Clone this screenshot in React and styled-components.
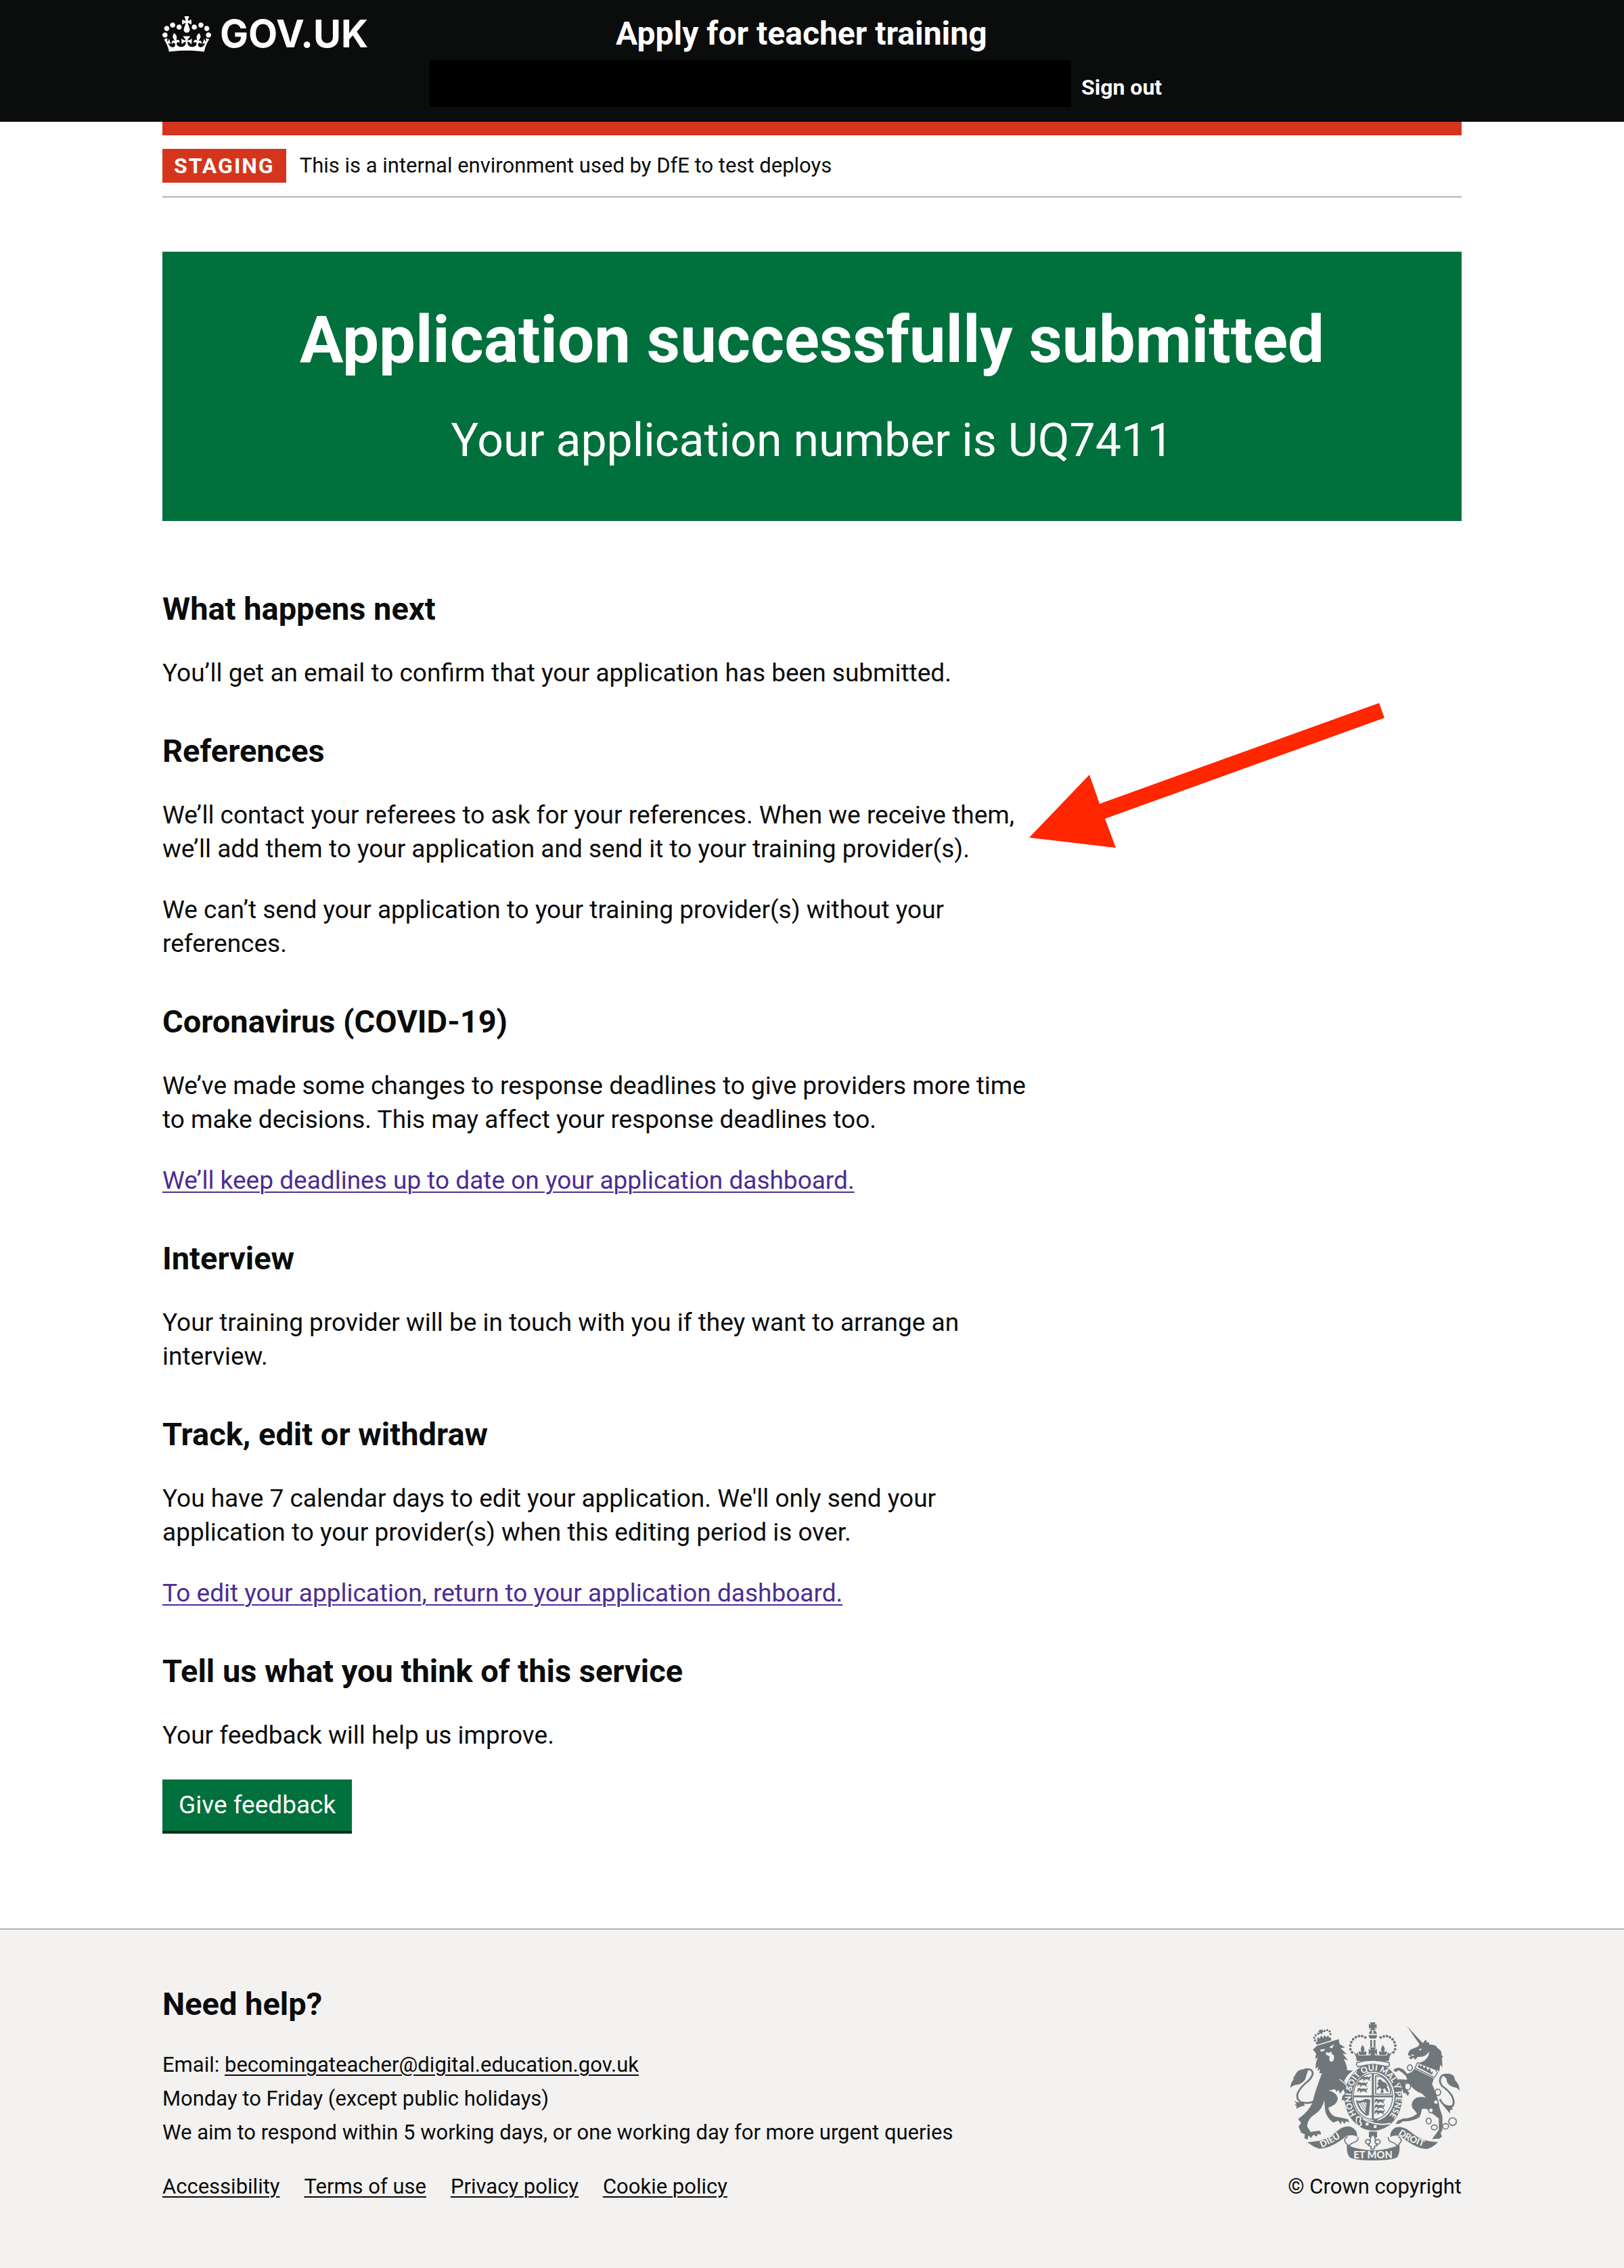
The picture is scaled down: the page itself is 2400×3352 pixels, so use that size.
import React from "react";
import styled, { createGlobalStyle } from "styled-components";

const color = {
  ink: "#0b0c0c",
  red: "#d4351c",
  green: "#00703c",
  greenShadow: "#002d18",
  border: "#b1b4b6",
  footer: "#f3f2f1",
  visited: "#4c2c92",
  arms: "#6f777b",
};

const GlobalStyle = createGlobalStyle`
  *, *::before, *::after { box-sizing: border-box; }
  body {
    margin: 0;
    background: ${color.footer};
    color: ${color.ink};
    font-family: Roboto, "Liberation Sans", sans-serif;
    -webkit-font-smoothing: antialiased;
  }
  h1, h2, p, ul { margin: 0; padding: 0; }
  a {
    text-decoration-thickness: 2px;
    text-underline-offset: 4px;
  }
`;

const Page = styled.div`
  background: #ffffff;
`;

const Container = styled.div`
  margin: 0 10%;
`;

const Header = styled.header`
  background: ${color.ink};
  color: #ffffff;
  padding: 20px 0 22px;
`;

const HeaderRow = styled.div`
  display: flex;
  align-items: center;
  height: 60px;
`;

const LogoLink = styled.a`
  display: flex;
  align-items: center;
  gap: 13px;
  flex: 0 0 670px;
  color: inherit;
  text-decoration: none;
  font: 700 56px/60px Inter, Roboto, sans-serif;
`;

const ServiceLink = styled.a`
  color: inherit;
  text-decoration: none;
  font-size: 48px;
  font-weight: 700;
  line-height: 60px;
`;

const AccountNav = styled.nav`
  display: flex;
  align-items: center;
  gap: 15px;
  margin: 9px 0 0 395px;
`;

const Redacted = styled.div`
  flex: 0 1 948px;
  height: 69px;
  background: #000000;
`;

const SignOut = styled.a`
  padding-top: 10px;
  color: inherit;
  text-decoration: none;
  font-size: 32px;
  font-weight: 700;
  line-height: 40px;
`;

const PhaseBanner = styled.div`
  display: flex;
  gap: 20px;
  padding: 20px 0;
  border-top: 20px solid ${color.red};
  border-bottom: 2px solid ${color.border};
  font-size: 31px;
  line-height: 50px;
`;

const PhaseTag = styled.strong`
  padding: 0 17px;
  background: ${color.red};
  color: #ffffff;
  font-size: 32px;
  letter-spacing: 2px;
`;

const Main = styled.main`
  padding: 80px 0 144px;
`;

const Panel = styled.div`
  display: grid;
  gap: 60px;
  padding: 80px;
  background: ${color.green};
  color: #ffffff;
  text-align: center;
`;

const PanelTitle = styled.h1`
  font-size: 96px;
  font-weight: 700;
  line-height: 100px;
`;

const PanelBody = styled.p`
  font-size: 68px;
  line-height: 78px;
`;

const Columns = styled.div`
  position: relative;
  margin-top: 100px;
`;

const Content = styled.div`
  display: flex;
  flex-direction: column;
  align-items: flex-start;
  gap: 60px;
  width: 68%;
`;

const Section = styled.section`
  display: grid;
  justify-items: start;
  gap: 40px;
`;

const Heading = styled.h2`
  font-size: 47px;
  font-weight: 700;
  line-height: 60px;
`;

const Text = styled.p`
  font-size: 37px;
  line-height: 50px;
`;

const VisitedLink = styled.a`
  color: ${color.visited};
`;

const Button = styled.button`
  padding: 0 24px;
  height: 76px;
  border: 0;
  background: ${color.green};
  box-shadow: 0 4px 0 ${color.greenShadow};
  color: #ffffff;
  font: 400 37px/76px Roboto, "Liberation Sans", sans-serif;
`;

const Arrow = styled.svg`
  position: absolute;
  left: 1281px;
  top: 169px;
  width: 525px;
  height: 215px;
`;

const Footer = styled.footer`
  padding: 80px 0 101px;
  border-top: 2px solid ${color.border};
  background: ${color.footer};
  font-size: 31px;
  line-height: 50px;
`;

const FooterLayout = styled(Container)`
  display: flex;
  justify-content: space-between;
  align-items: flex-end;
`;

const Help = styled.div`
  display: grid;
  gap: 35px;
`;

const FooterLink = styled.a`
  color: inherit;
`;

const FooterLinks = styled.ul`
  display: flex;
  gap: 36px;
  list-style: none;
  line-height: 40px;
`;

const Copyright = styled.a`
  display: grid;
  justify-items: center;
  gap: 19px;
  color: inherit;
  text-decoration: none;
  line-height: 40px;
`;

function Crown() {
  return (
    <svg width="72" height="53" viewBox="0 0 132 97" fill="currentColor" aria-hidden="true">
      <path
        fillRule="evenodd"
        d="M25 30.2c3.5 1.5 7.7-.2 9.1-3.7 1.5-3.6-.2-7.8-3.9-9.2-3.6-1.4-7.6.3-9.1 3.9-1.4 3.5.3 7.5 3.9 9zM9 39.5c3.6 1.5 7.8-.2 9.2-3.7 1.5-3.6-.2-7.8-3.9-9.1-3.6-1.5-7.6.2-9.1 3.8-1.4 3.5.3 7.5 3.8 9zM4.4 57.2c3.5 1.5 7.7-.2 9.1-3.8 1.5-3.6-.2-7.7-3.9-9.1-3.5-1.5-7.6.3-9.1 3.8-1.4 3.5.3 7.6 3.9 9.1zm38.3-21.4c3.5 1.5 7.7-.2 9.1-3.8 1.5-3.6-.2-7.7-3.9-9.1-3.6-1.5-7.6.3-9.1 3.8-1.3 3.6.4 7.7 3.9 9.1zm64.4-5.6c-3.6 1.5-7.8-.2-9.1-3.7-1.5-3.6.2-7.8 3.8-9.2 3.6-1.4 7.7.3 9.2 3.9 1.3 3.5-.4 7.5-3.9 9zm15.9 9.3c-3.6 1.5-7.7-.2-9.1-3.7-1.5-3.6.2-7.8 3.7-9.1 3.6-1.5 7.7.2 9.2 3.8 1.5 3.5-.3 7.5-3.8 9zm4.7 17.7c-3.6 1.5-7.8-.2-9.2-3.8-1.5-3.6.2-7.7 3.9-9.1 3.6-1.5 7.7.3 9.2 3.8 1.3 3.5-.4 7.6-3.9 9.1zM89.3 35.8c-3.6 1.5-7.8-.2-9.2-3.8-1.4-3.6.2-7.7 3.9-9.1 3.6-1.5 7.7.3 9.2 3.8 1.4 3.6-.3 7.7-3.9 9.1zM69.7 17.7l8.9 4.7V9.3l-8.9 2.8c-.2-.3-.5-.6-.9-.9L72.4 0H59.6l3.5 11.2c-.3.3-.6.5-.9.9l-8.8-2.8v13.1l8.8-4.7c.3.3.6.7.9.9l-5 15.4v.1c-.2.8-.4 1.6-.4 2.4 0 4.1 3.1 7.5 7 8.1h.2c.3 0 .7.1 1 .1.4 0 .7 0 1-.1h.2c4-.6 7.1-4.1 7.1-8.1 0-.8-.1-1.7-.4-2.4V34l-5.1-15.4c.4-.2.7-.6 1-.9zM66 92.8c16.9 0 32.8 1.1 47.1 3.2 4-16.9 8.9-26.7 14-33.5l-9.6-3.4c1 4.9 1.1 7.2 0 10.2-1.5-1.4-3-4.3-4.2-8.7L108.6 76c2.8-2 5-3.2 7.5-3.3-4.4 9.4-10 11.9-13.6 11.2-4.3-.8-6.3-4.6-5.6-7.9 1-4.7 5.7-5.9 8-.5 4.3-8.7-3-11.4-7.6-8.8 7.1-7.2 7.9-13.5 2.1-21.1-8 6.1-8.1 12.3-4.5 20.8-4.7-5.4-12.1-2.5-9.5 6.2 3.4-5.2 7.9-2 7.2 3.1-.6 4.3-6.4 7.8-13.5 7.2-10.3-.9-10.9-8-11.2-13.8 2.5-.5 7.1 1.8 11 7.3L80.2 60c-4.1 4.4-8 5.3-12.3 5.4 1.4-4.4 8-11.6 8-11.6H55.5s6.4 7.2 7.9 11.6c-4.2-.1-8-1-12.3-5.4l1.4 16.4c3.9-5.5 8.5-7.7 10.9-7.3-.3 5.8-.9 12.8-11.1 13.8-7.2.6-12.9-2.9-13.5-7.2-.7-5 3.8-8.3 7.1-3.1 2.7-8.7-4.6-11.6-9.4-6.2 3.7-8.5 3.6-14.7-4.6-20.8-5.8 7.6-5 13.9 2.2 21.1-4.7-2.6-11.9.1-7.7 8.8 2.3-5.5 7.1-4.2 8.1.5.7 3.3-1.3 7.1-5.7 7.9-3.5.7-9-1.8-13.5-11.2 2.5.1 4.7 1.3 7.5 3.3l-4.7-15.4c-1.2 4.4-2.7 7.2-4.3 8.7-1.1-3-.9-5.3 0-10.2l-9.5 3.4c5 6.9 9.9 16.7 14 33.5 14.8-2.1 30.8-3.2 47.7-3.2z"
      />
    </svg>
  );
}

/* Walking lions of England, repeated in the first and fourth quarters. */
const passant =
  "M0 4l8-4 8 4 14-1 8 3 4-6 3 1-3 9-5 4 6 6-6 1-6-6-12 0-3 6-7 0 4-7-7-2-4 6-5-1 3-6z";

const crownBeads = [
  [345, 217], [338, 203], [338, 187], [342, 172], [350, 159], [362, 150], [376, 145], [390, 145], [404, 151],
  [472, 151], [486, 146], [500, 145], [513, 150], [525, 159], [533, 172], [537, 187], [536, 203], [529, 217],
];

const lionCrownBeads = [
  [181, 164], [178, 152], [184, 141], [195, 134], [223, 122], [235, 118], [246, 124], [250, 136],
];

function RoyalArms() {
  const ink = color.arms;
  const paper = color.footer;
  return (
    <svg width="250" height="204" viewBox="72 84 750 612" fill={ink} aria-hidden="true">
      <defs>
        <path id="garter" d="M365 492A99 117 0 1 1 515 492" />
        <path id="dieu" d="M209 640Q262 618 322 577" />
        <path id="droit" d="M548 579Q600 618 680 640" />
      </defs>

      {/* Imperial crown */}
      <path d="M424 84h26l-6 11 10-5v22l-10-6 6 12h-26l6-12-10 6V90l10 5z" />
      <path d="M420 135q3-15 14-17v17zM440 118q13 3 16 17h-16zM419 140h37q2 10-7 16h-23q-9-6-7-16z" />
      {crownBeads.map(([x, y]) => (
        <circle key={`${x}-${y}`} cx={x} cy={y} r="6" />
      ))}
      <path d="M426 162h8v30h-8zM441 162h8v30h-8z" />
      <path d="M392 184q-14 18-4 33l-12-6q-4 10 2 17h28q6-8 0-17l-10 6q10-15-4-33zM482 184q-14 18-4 33l-10-6q-6 9 0 17h28q6-8 2-17l-12 6q10-15-4-33z" />
      <path d="M422 194h31l-9 14 12-6v26l-12-8 5 12h-24l5-12-11 8v-26l12 6zM349 212l14 12 8-8 2 14h128l3-14 8 8 14-12q-16 20-18 43H366q-1-22-17-43z" />
      <path d="M368 262q70-20 140 0 8 10-4 19-66-18-132 0-12-9-4-19z" fill={paper} stroke={ink} strokeWidth="5" />

      {/* Garter and quartered shield */}
      <ellipse cx="440" cy="416" rx="128" ry="148" />
      <ellipse cx="440" cy="412" rx="94" ry="109" fill={paper} />
      <ellipse cx="438" cy="412" rx="87" ry="102" fill="none" stroke={ink} strokeWidth="4" />
      <path d="M433 310h9v204h-9zM351 408h175v8H351z" />
      {[322, 348, 374].map((y, i) => (
        <path key={y} d={passant} transform={`translate(${i ? 370 : 384} ${y})`} />
      ))}
      {[422, 447, 471].map((y) => (
        <path key={y} d={passant} transform={`translate(446 ${y})`} />
      ))}
      <path d="M450 322h22q34 20 44 60v20h-66z" fill="none" stroke={ink} strokeWidth="5" />
      <path d="M460 340l12-4 8 10 14 6 10 14-6 2 6 10 4 16-10-4-8-14-8 4 4 14-12 4-2-6 4-12-8-6-10 10-4-8 10-12-8-8 6-6z" />
      <path d="M362 428q14 8 32 0 14-8 32 0l-6 66q-12 8-20-2-30-24-38-64zm10 9q8 28 32 50l6-46q-16-8-24 0-8 2-14-4z" fillRule="evenodd" />
      <path d="M378 440l28 40M388 440l20 30M398 438l12 20" stroke={ink} strokeWidth="3" />
      <path d="M432 512h30l-14 14z" />
      <path d="M365 500q24-4 22 14-8 8 2 16 4 14-14 16-22-18-10-46z" fill={paper} />
      <path d="M369 506q14-2 12 8-8 8 2 20 0 8-10 6-12-14-4-34z" />
      <path d="M394 512q58 34 122 20" fill="none" stroke={paper} strokeWidth="6" />
      <circle cx="412" cy="535" r="7" fill={paper} />
      <circle cx="448" cy="546" r="7" fill={paper} />

      {/* Lion */}
      <path d="M184 171l66-22 4 14-65 21z" />
      {lionCrownBeads.map(([x, y]) => (
        <circle key={`${x}-${y}`} cx={x} cy={y} r="5" />
      ))}
      <path d="M200 114l8 4 6-5 1 8 6 4-8 4 1 9-8-5-8 3 2-8-6-5 8-2zM190 160l4-12 7 8 8-14 8 12 6-14 9 10 7-10 5 14-51 16z" />
      <path d="M172 205L189 188 286 158 290 180 315 195 295 199 322 225 304 223 327 252 308 246Q322 270 324 296L350 298Q322 316 310 345L338 385Q348 410 348 436L346 446 334 432 336 446 322 434 318 444 310 428 300 430 302 412 314 398 308 382Q296 390 294 402L284 384 276 392 270 380 242 386Q280 396 282 420 282 448 240 462 246 490 270 502 300 506 328 514L332 528 318 522 312 534 300 520 296 536 284 520 262 528Q232 508 226 475L222 428Q214 470 180 492 148 510 146 545L162 570 200 564Q210 570 206 582L194 578 188 590 174 582 164 596 152 586 148 604 134 598 136 580 120 574 108 545 120 530 106 512 118 503Q150 480 170 440 176 410 190 370 200 340 212 310L200 310 204 290 192 300 196 280 184 290Q182 262 194 240L182 246 186 222z" />
      <path d="M204 205l24-3-10 10h-12zM246 193l20-12-8 16h-10zM229 215l12 4 15-6-2 10 10 6q6 28-10 30-14-2-8-24l-16-8z" fill={paper} />
      <path d="M290 336q34 24 48 56" fill="none" stroke={paper} strokeWidth="4" />
      <path d="M177 434q-28 12-58 4-24-14-14-42 14-28 48-54 28-30 12-46-12-8-32-2" fill="none" stroke={ink} strokeWidth="8" />
      <path d="M152 292q-44-6-56 20l-14 24 8-2q-18 16-18 40 14-14 34-14 32-10 36-38zM128 436q-26 8-40-6l12 18-10 0 10 8-2 12q16-12 38-14z" />

      {/* Unicorn */}
      <path d="M587 99l75 80-12 10zM656 184q4-12 16-24l6 14 8-2 2 10q32 0 36 16 20 10 18 30l7 8-5 4 2 42-10-10-4 30-12-8-4 12q-40-28-90-42 38 4 58-32l4-20q-20 30-50 24l-14 14-6-10-12 8-10-10 14-4-16-4q-2-14 12-26l30-12 12-14z" />
      <path d="M640 205l14-6-4 10zM606 226l16 2-8 6z" fill={paper} />
      <path d="M636 262l80 32 8 14-14 20-86-42z" fill={paper} stroke={ink} strokeWidth="4" />
      <path d="M636 282l6-14 8 12 8-8 6 16 10-10 6 18 10-10 6 20 10-6-6 16z" />
      <path d="M622 290L708 332 700 358 712 385Q728 425 734 465L746 500 746 560 738 575 744 590 732 600 716 600 700 602 712 585 730 560 730 510 690 480Q680 462 655 468 652 490 644 505 610 525 572 522L555 533 538 535 548 520 572 510Q610 510 634 488L612 462Q604 435 630 418 650 412 672 416L655 400Q625 392 600 358L580 352 590 385 600 398 592 410 584 398 572 396 570 382 556 384 566 372 556 350 546 342 552 336 590 338 584 322 566 305 552 296 540 304 530 300 532 290 552 284 572 292 590 312 610 304z" />
      <g fill={paper} stroke={ink} strokeWidth="5">
        <ellipse cx="602" cy="285" rx="11" ry="13" />
        <ellipse cx="592" cy="368" rx="13" ry="15" />
        <ellipse cx="726" cy="394" rx="12" ry="14" />
        <ellipse cx="717" cy="437" rx="10" ry="10" />
        <ellipse cx="695" cy="474" rx="10" ry="11" />
        <ellipse cx="685" cy="521" rx="11" ry="13" />
        <ellipse cx="710" cy="550" rx="13" ry="11" />
        <ellipse cx="760" cy="545" rx="13" ry="12" />
        <circle cx="791" cy="524" r="17" />
      </g>
      <path d="M734 424q22 42 50 36 22-14 4-50-14-24-44-44-18-24-2-44 12-12 36-2" fill="none" stroke={ink} strokeWidth="8" />
      <path d="M746 316q34-12 52 8l4 16 10 12q10 16 10 36-10-16-24-16-34-8-34-38zM742 440q28 18 58 10l-14 12 8 8-14 2 0 16q-20-20-38-48z" />

      {/* Garter motto */}
      <text fill={paper} fontFamily="Lato, sans-serif" fontWeight="900" fontSize="37">
        <textPath href="#garter">HONI SOIT QUI MAL Y PENSE</textPath>
      </text>

      {/* Motto scroll */}
      <path d="M148 615q22-2 52-6 40-8 78-42 34-30 66-18 26 12 24 42-14-8-30-6-14-2-26 10-62 48-112 49-26-6-52-29zM727 614q-20 0-50-6-38-8-74-40-34-28-64-18-26 12-24 42 14-8 30-6 14-2 26 10 60 48 106 49 26-6 50-31z" />
      <path d="M326 590q-20 12-10 26 10 12 24 24M372 592q2 16-14 22-18 6-28 18M550 590q20 12 10 26-8 12-22 24M506 592q-2 16 14 22 18 6 26 18" fill="none" stroke={ink} strokeWidth="5" />
      <path d="M322 628q114 46 234 0 2 34-10 54-22 14-108 14t-104-14q-14-20-12-54z" />
      <g fill={paper} fontFamily="Lato, sans-serif" fontWeight="900" fontSize="40">
        <text><textPath href="#dieu" startOffset="2">DIEU</textPath></text>
        <text><textPath href="#droit" startOffset="2">DROIT</textPath></text>
        <text x="438" y="686" textAnchor="middle" fontSize="44">ET MON</text>
      </g>
      <path d="M420 568h36v26h-36z" />
      <path d="M438 580q-18 18-10 36-10-20-22-8-4 12 8 16l10-4-6 10 12 4-2 8q10 8 18 0l-2-8 12-4-6-10 10 4q14-4 8-16-12-12-22 8 8-18-8-36z" fill={paper} stroke={ink} strokeWidth="5" />
    </svg>
  );
}

const sections = [
  {
    title: "What happens next",
    text: ["You’ll get an email to confirm that your application has been submitted."],
  },
  {
    title: "References",
    text: [
      "We’ll contact your referees to ask for your references. When we receive them, we’ll add them to your application and send it to your training provider(s).",
      "We can’t send your application to your training provider(s) without your references.",
    ],
  },
  {
    title: "Coronavirus (COVID-19)",
    text: [
      "We’ve made some changes to response deadlines to give providers more time to make decisions. This may affect your response deadlines too.",
    ],
    link: "We’ll keep deadlines up to date on your application dashboard.",
  },
  {
    title: "Interview",
    text: ["Your training provider will be in touch with you if they want to arrange an interview."],
  },
  {
    title: "Track, edit or withdraw",
    text: [
      "You have 7 calendar days to edit your application. We'll only send your application to your provider(s) when this editing period is over.",
    ],
    link: "To edit your application, return to your application dashboard.",
  },
  {
    title: "Tell us what you think of this service",
    text: ["Your feedback will help us improve."],
    action: "Give feedback",
  },
];

const footerLinks = ["Accessibility", "Terms of use", "Privacy policy", "Cookie policy"];

export default function App() {
  return (
    <Page>
      <GlobalStyle />
      <Header>
        <Container>
          <HeaderRow>
            <LogoLink href="#home">
              <Crown />
              GOV.UK
            </LogoLink>
            <ServiceLink href="#service">Apply for teacher training</ServiceLink>
          </HeaderRow>
          <AccountNav>
            <Redacted />
            <SignOut href="#sign-out">Sign out</SignOut>
          </AccountNav>
        </Container>
      </Header>

      <Container>
        <PhaseBanner>
          <PhaseTag>STAGING</PhaseTag>
          <span>This is a internal environment used by DfE to test deploys</span>
        </PhaseBanner>
        <Main>
          <Panel>
            <PanelTitle>Application successfully submitted</PanelTitle>
            <PanelBody>Your application number is UQ7411</PanelBody>
          </Panel>
          <Columns>
            <Content>
              {sections.map((section) => (
                <Section key={section.title}>
                  <Heading>{section.title}</Heading>
                  {section.text.map((line) => (
                    <Text key={line}>{line}</Text>
                  ))}
                  {section.link && (
                    <Text>
                      <VisitedLink href="#dashboard">{section.link}</VisitedLink>
                    </Text>
                  )}
                  {section.action && <Button type="button">{section.action}</Button>}
                </Section>
              ))}
            </Content>
            <Arrow viewBox="0 0 525 215" aria-hidden="true">
              <path d="M0 199L89 106l15 43L517 0l8 22L112 171l16 43z" fill="#ff2600" />
            </Arrow>
          </Columns>
        </Main>
      </Container>

      <Footer>
        <FooterLayout>
          <Help>
            <Heading>Need help?</Heading>
            <div>
              <p>
                Email:{" "}
                <FooterLink href="mailto:becomingateacher@digital.education.gov.uk">
                  becomingateacher@digital.education.gov.uk
                </FooterLink>
              </p>
              <p>Monday to Friday (except public holidays)</p>
              <p>We aim to respond within 5 working days, or one working day for more urgent queries</p>
            </div>
            <FooterLinks>
              {footerLinks.map((label) => (
                <li key={label}>
                  <FooterLink href={`#${label.toLowerCase().replace(/ /g, "-")}`}>{label}</FooterLink>
                </li>
              ))}
            </FooterLinks>
          </Help>
          <Copyright href="#copyright">
            <RoyalArms />
            © Crown copyright
          </Copyright>
        </FooterLayout>
      </Footer>
    </Page>
  );
}
